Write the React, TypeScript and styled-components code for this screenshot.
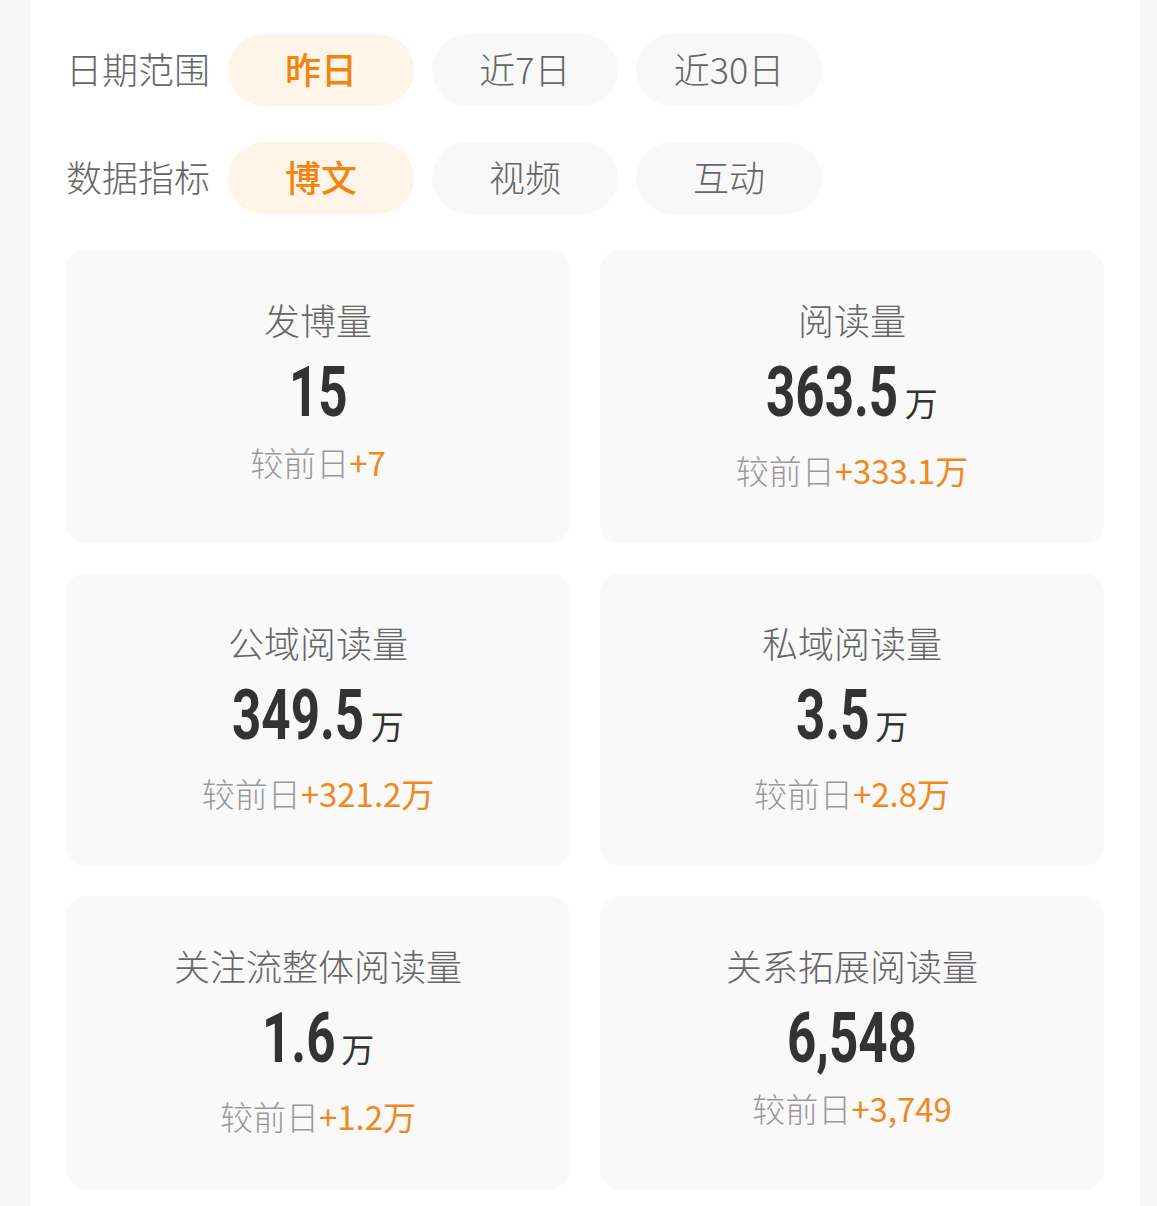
import { useLayoutEffect, useRef, useState } from 'react';
import styled, { createGlobalStyle } from 'styled-components';

// 数字使用压缩字形，按比例横向缩放
const NUM_SCALE = 0.72;

interface Stat {
	title: string;
	value: string;
	unit?: string;
	delta: string;
}

const stats: Stat[] = [
	{ title: '发博量', value: '15', delta: '+7' },
	{ title: '阅读量', value: '363.5', unit: '万', delta: '+333.1万' },
	{ title: '公域阅读量', value: '349.5', unit: '万', delta: '+321.2万' },
	{ title: '私域阅读量', value: '3.5', unit: '万', delta: '+2.8万' },
	{ title: '关注流整体阅读量', value: '1.6', unit: '万', delta: '+1.2万' },
	{ title: '关系拓展阅读量', value: '6,548', delta: '+3,749' },
];

const dateOptions = ['昨日', '近7日', '近30日'];
const metricOptions = ['博文', '视频', '互动'];

const CondensedNumber = ({ children }: { children: string }): JSX.Element => {
	const ref = useRef<HTMLSpanElement>(null);
	const [width, setWidth] = useState<number>();

	useLayoutEffect(() => {
		const measure = () => {
			if (ref.current) setWidth(ref.current.offsetWidth * NUM_SCALE);
		};
		measure();
		document.fonts?.ready.then(measure);
	}, [children]);

	return (
		<NumBox style={{ width }}>
			<NumText ref={ref}>{children}</NumText>
		</NumBox>
	);
};

const App = (): JSX.Element => {
	const [range, setRange] = useState('昨日');
	const [metric, setMetric] = useState('博文');

	return (
		<>
			<GlobalStyle />
			<Page>
				<Panel>
					<Filters>
						<FilterRow>
							<Label>日期范围</Label>
							{dateOptions.map((opt) => (
								<Pill key={opt} $active={opt === range} onClick={() => setRange(opt)}>
									{opt}
								</Pill>
							))}
						</FilterRow>
						<FilterRow>
							<Label>数据指标</Label>
							{metricOptions.map((opt) => (
								<Pill key={opt} $active={opt === metric} onClick={() => setMetric(opt)}>
									{opt}
								</Pill>
							))}
						</FilterRow>
					</Filters>

					<Grid>
						{stats.map((s) => (
							<Card key={s.title}>
								<Title>{s.title}</Title>
								<ValueRow>
									<CondensedNumber>{s.value}</CondensedNumber>
									{s.unit && <Unit>{s.unit}</Unit>}
								</ValueRow>
								<Compare>
									较前日<Delta>{s.delta}</Delta>
								</Compare>
							</Card>
						))}
					</Grid>
				</Panel>
			</Page>
		</>
	);
};

export default App;

const GlobalStyle = createGlobalStyle`
	html, body {
		margin: 0;
		padding: 0;
		background: #f7f7f7;
	}
	body {
		font-family: "Noto Sans CJK SC", "Noto Sans", sans-serif;
		font-weight: 300;
	}
`;

const Page = styled.div`
	display: flex;
	padding-left: 30px;
`;

const Panel = styled.div`
	width: 1110px;
	min-height: 1206px;
	box-sizing: border-box;
	background: #ffffff;
	padding: 34px 36px 0;
`;

const Filters = styled.div`
	display: flex;
	flex-direction: column;
	gap: 36px;
`;

const FilterRow = styled.div`
	display: flex;
	align-items: center;
	gap: 18px;
`;

const Label = styled.span`
	width: 144px;
	padding-bottom: 4px;
	font-size: 36px;
	color: #666666;
	white-space: nowrap;
`;

const Pill = styled.button<{ $active: boolean }>`
	width: 186px;
	height: 72px;
	border: none;
	border-radius: 36px;
	padding: 0 0 4px;
	display: flex;
	align-items: center;
	justify-content: center;
	font-family: inherit;
	font-size: 36px;
	font-weight: ${(p) => (p.$active ? 500 : 300)};
	color: ${(p) => (p.$active ? '#f2840f' : '#666666')};
	background: ${(p) => (p.$active ? '#fff4e8' : '#f8f8f8')};
	cursor: pointer;
`;

const Grid = styled.div`
	display: grid;
	grid-template-columns: repeat(2, 504px);
	gap: 30px;
	margin-top: 36px;
`;

const Card = styled.div`
	height: 293px;
	box-sizing: border-box;
	padding-top: 48px;
	background: #f9f9f9;
	border-radius: 20px;
	display: flex;
	flex-direction: column;
	align-items: center;
`;

const Title = styled.div`
	font-size: 36px;
	line-height: 43px;
	color: #666666;
`;

const ValueRow = styled.div`
	display: flex;
	align-items: baseline;
	margin-top: 15px;
	color: #333333;
`;

const NumBox = styled.span`
	display: inline-block;
	white-space: nowrap;
	font-family: Roboto, "Liberation Sans", sans-serif;
	font-weight: 700;
	font-size: 71px;
	line-height: 72px;
`;

const NumText = styled.span`
	display: inline-block;
	transform: scaleX(${NUM_SCALE});
	transform-origin: left center;
`;

const Unit = styled.span`
	font-size: 33px;
	line-height: 68px;
	font-weight: 400;
	margin-left: 6px;
`;

const Compare = styled.div`
	margin-top: 13px;
	font-size: 33px;
	line-height: 42px;
	color: #999999;
`;

const Delta = styled.span`
	font-weight: 400;
	color: #f0881f;
`;
